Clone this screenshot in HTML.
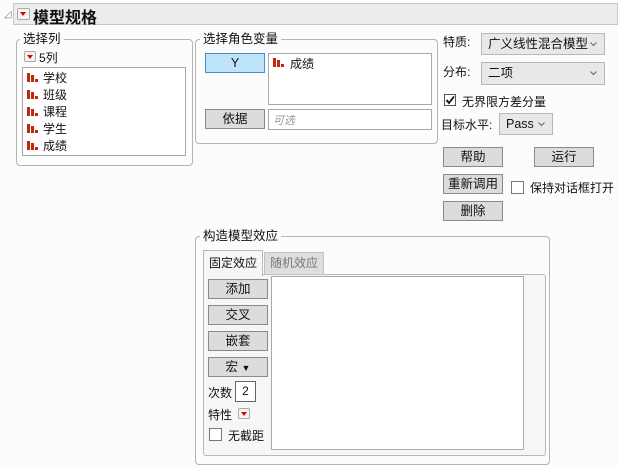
<!DOCTYPE html>
<html><head><meta charset="utf-8"><style>
*{box-sizing:border-box;margin:0;padding:0}
body{width:618px;height:469px;background:#fcfcfc;font-family:"Liberation Sans","Noto Sans CJK SC",sans-serif;font-size:12px;color:#111;position:relative;overflow:hidden}
.a{position:absolute}
.grp{position:absolute;border:1px solid #b4b4b4;border-radius:4px}
.lbl{position:absolute;background:#fcfcfc;padding:0 3px;font-size:12.5px;line-height:14px}
.btn{position:absolute;background:#dcdcdc;border:1px solid #8a8a8a;text-align:center;line-height:18px;font-size:12.5px}
.box{position:absolute;background:#fff;border:1px solid #a8a8a8}
.rb{position:absolute;width:12px;height:11px;border:1px solid #aaa;border-radius:2px;background:#f4f4f4}
.rb:after{content:"";position:absolute;left:2px;top:3px;border-left:3.5px solid transparent;border-right:3.5px solid transparent;border-top:4px solid #d00}
.ic{position:absolute;width:11px;height:10px}
.ic i{position:absolute;bottom:0;background:#c4260c;width:3px}
.sel{position:absolute;background:#e8e8e8;border:1px solid #b8b8b8;line-height:20px;padding-left:6px;font-size:12.5px}
.sel svg{position:absolute;right:7px;top:8px}
.cb{position:absolute;width:12px;height:12px;border:1px solid #555;background:#fff}
</style></head><body>
<div class="a" style="left:4px;top:9px;color:#888;font-size:10px">◿</div>
<div class="a" style="left:13px;top:3px;width:605px;height:22px;background:#ececec;border:1px solid #c8c8c8"></div>
<div class="rb" style="left:17px;top:8px;width:13px;height:12px"></div>
<div class="a" style="left:33px;top:4px;font-size:16px;font-weight:bold">模型规格</div>

<div class="grp" style="left:16px;top:39px;width:177px;height:127px"></div>
<div class="lbl" style="left:20px;top:32px">选择列</div>
<div class="rb" style="left:24px;top:51px"></div>
<div class="a" style="left:39px;top:49px">5列</div>
<div class="box" style="left:22px;top:67px;width:164px;height:89px"></div>
<div class="a" style="left:27px;top:70px;line-height:17px">
<div style="position:relative;padding-left:16px">学校<br>班级<br>课程<br>学生<br>成绩</div></div>

<div class="grp" style="left:195px;top:39px;width:243px;height:105px"></div>
<div class="lbl" style="left:200px;top:32px">选择角色变量</div>
<div class="btn" style="left:205px;top:53px;width:60px;height:20px;background:#bfe3f8;border-color:#4a8fc0">Y</div>
<div class="box" style="left:268px;top:53px;width:164px;height:52px"></div>
<div class="a" style="left:290px;top:55px">成绩</div>
<div class="btn" style="left:205px;top:109px;width:60px;height:20px">依据</div>
<div class="box" style="left:268px;top:109px;width:164px;height:21px"></div>
<div class="a" style="left:273px;top:112px;color:#999;font-style:italic;font-size:11px">可选</div>

<div class="a" style="left:443px;top:33px">特质:</div>
<div class="sel" style="left:481px;top:33px;width:124px;height:22px">广义线性混合模型<svg width="7" height="5"><path d="M0.5 0.5L3.5 3.5L6.5 0.5" fill="none" stroke="#666"/></svg></div>
<div class="a" style="left:443px;top:63px">分布:</div>
<div class="sel" style="left:481px;top:62px;width:124px;height:23px">二项<svg width="7" height="5"><path d="M0.5 0.5L3.5 3.5L6.5 0.5" fill="none" stroke="#666"/></svg></div>
<div class="cb" style="left:444px;top:94px"></div>
<svg class="a" style="left:444px;top:94px" width="12" height="12"><path d="M2.5 6L5 9L10 2.5" fill="none" stroke="#111" stroke-width="1.8"/></svg>
<div class="a" style="left:462px;top:93px">无界限方差分量</div>
<div class="a" style="left:441px;top:116px">目标水平:</div>
<div class="sel" style="left:499px;top:113px;width:54px;height:22px">Pass<svg width="7" height="5"><path d="M0.5 0.5L3.5 3.5L6.5 0.5" fill="none" stroke="#666"/></svg></div>
<div class="btn" style="left:443px;top:147px;width:60px;height:20px">帮助</div>
<div class="btn" style="left:534px;top:147px;width:60px;height:20px">运行</div>
<div class="btn" style="left:443px;top:174px;width:60px;height:20px">重新调用</div>
<div class="cb" style="left:511px;top:181px;width:13px;height:13px;border-color:#777"></div>
<div class="a" style="left:530px;top:179px">保持对话框打开</div>
<div class="btn" style="left:443px;top:201px;width:60px;height:20px">删除</div>

<div class="grp" style="left:195px;top:236px;width:355px;height:229px"></div>
<div class="lbl" style="left:200px;top:229px">构造模型效应</div>
<div class="a" style="left:203px;top:274px;width:343px;height:182px;border:1px solid #b8b8b8;border-radius:3px;background:#f6f6f6"></div>
<div class="a" style="left:264px;top:252px;width:60px;height:23px;background:#dedede;border:1px solid #c0c0c0;color:#777;text-align:center;line-height:21px">随机效应</div>
<div class="a" style="left:203px;top:250px;width:60px;height:26px;background:#f6f6f6;border:1px solid #b8b8b8;border-bottom:none;text-align:center;line-height:24px">固定效应</div>
<div class="btn" style="left:208px;top:279px;width:60px;height:20px">添加</div>
<div class="btn" style="left:208px;top:305px;width:60px;height:20px">交叉</div>
<div class="btn" style="left:208px;top:331px;width:60px;height:20px">嵌套</div>
<div class="btn" style="left:208px;top:357px;width:60px;height:20px">宏 <span style="font-size:9px">▼</span></div>
<div class="a" style="left:208px;top:384px">次数</div>
<div class="box" style="left:235px;top:381px;width:21px;height:21px;border-color:#666;text-align:center;line-height:19px">2</div>
<div class="a" style="left:208px;top:406px">特性</div>
<div class="rb" style="left:238px;top:408px"></div>
<div class="cb" style="left:209px;top:428px;width:13px;height:13px;border-color:#777"></div>
<div class="a" style="left:228px;top:427px">无截距</div>
<div class="box" style="left:271px;top:276px;width:253px;height:174px"></div>
<div class="ic" style="left:27px;top:72px"><i style="left:0;height:9px"></i><i style="left:4px;height:7px"></i><i style="left:8px;height:3px"></i></div>
<div class="ic" style="left:27px;top:89px"><i style="left:0;height:9px"></i><i style="left:4px;height:7px"></i><i style="left:8px;height:3px"></i></div>
<div class="ic" style="left:27px;top:106px"><i style="left:0;height:9px"></i><i style="left:4px;height:7px"></i><i style="left:8px;height:3px"></i></div>
<div class="ic" style="left:27px;top:123px"><i style="left:0;height:9px"></i><i style="left:4px;height:7px"></i><i style="left:8px;height:3px"></i></div>
<div class="ic" style="left:27px;top:140px"><i style="left:0;height:9px"></i><i style="left:4px;height:7px"></i><i style="left:8px;height:3px"></i></div>
<div class="ic" style="left:273px;top:57px"><i style="left:0;height:9px"></i><i style="left:4px;height:7px"></i><i style="left:8px;height:3px"></i></div>
</body></html>
